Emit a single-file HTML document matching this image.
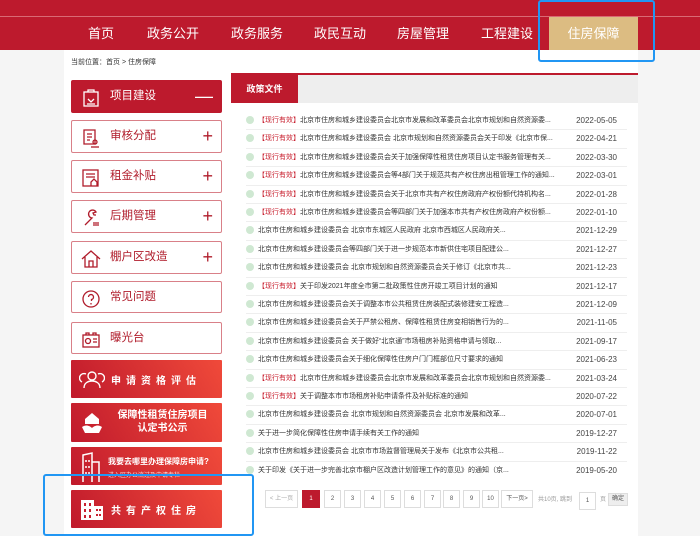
<!DOCTYPE html>
<html><head><meta charset="utf-8"><style>
*{margin:0;padding:0;box-sizing:border-box}
body{width:700px;height:536px;overflow:hidden;background:#f5f5f5;font-family:"Liberation Sans","Noto Sans CJK SC",sans-serif;position:relative}
.top{position:absolute;left:0;top:0;width:700px;height:50px;background:#bd1a2d;border-top:16px solid #bd1a2d}
.top:before{content:"";position:absolute;left:0;top:0;width:700px;height:1px;background:#d96a74}
.nav{position:absolute;top:17px;height:33px;color:#fff;font-size:13px;line-height:33px;text-align:center}
.act{background:#dcbc82}
.wrap{position:absolute;left:64px;top:50px;width:574px;height:486px;background:#fff}
.crumb{position:absolute;left:71px;top:57px;font-size:7px;color:#333}
.side{position:absolute;left:71px;width:151px;border:1px solid #d98088;border-radius:2px;background:#fff;color:#b01c2b;font-size:11.5px}
.side .t{position:absolute;left:38px;top:0;line-height:inherit}
.side .p{position:absolute;right:8px;font-size:18px;color:#b01c2b;top:0}
.side svg{position:absolute;left:9px;top:7px}
.red{position:absolute;left:71px;width:151px;background:linear-gradient(60deg,#c01a2c,#f04a3a);color:#fff;font-weight:bold;border-radius:1px}
.panel{position:absolute;left:231px;top:73px;width:407px;height:463px;background:#fff;border-top:2px solid #bd1a2d}
.tabh{height:28px;background:#eeeeee}
.tab{width:67px;height:28px;background:#bd1a2d;color:#fff;font-size:9px;font-weight:bold;line-height:28px;text-align:center}
.row{position:absolute;left:15px;width:381px;height:18.4px;border-bottom:1px solid #eee;font-size:7px;color:#333;line-height:17px}
.row .d{position:absolute;left:0;top:4px;width:8px;height:8px;border-radius:50%;background:#cfe8d2}
.row .x{position:absolute;left:12px}
.row .dt{position:absolute;right:10px;font-size:8px;color:#444}
.row i{font-style:normal;color:#c8202f}
.pg{position:absolute;top:490px;height:18px;border:1px solid #ddd;font-size:6px;line-height:16px;text-align:center;color:#555;background:#fff}
</style></head><body>
<div class="top"></div>
<div class="nav" style="left:78px;width:46px">首页</div>
<div class="nav" style="left:142px;width:62px">政务公开</div>
<div class="nav" style="left:226px;width:62px">政务服务</div>
<div class="nav" style="left:309px;width:62px">政民互动</div>
<div class="nav" style="left:392px;width:62px">房屋管理</div>
<div class="nav" style="left:476px;width:62px">工程建设</div>
<div class="nav act" style="left:549px;width:89px">住房保障</div>
<div class="wrap"></div>
<div class="crumb">当前位置：首页 &gt; 住房保障</div>

<div class="side" style="top:80px;height:33px;line-height:31px;background:#bd1a2d;border-color:#bd1a2d;color:#fff"><svg width="20" height="20" viewBox="0 0 20 20" fill="none" stroke="#fff" stroke-width="1.3"><rect x="3" y="4" width="14" height="14"/><path d="M7 4V2h6v2M7 11l3 3 3-3M6 16h8"/></svg><span class="t">项目建设</span><span class="p" style="color:#fff">—</span></div>
<div class="side" style="top:120px;height:33px;line-height:31px"><svg width="20" height="20" viewBox="0 0 20 20" fill="none" stroke="#b01c2b" stroke-width="1.3"><path d="M3 2h11v14H3zM6 6h5M6 9h5M6 12h3"/><circle cx="14" cy="14" r="2"/><path d="M10 19h8"/></svg><span class="t">审核分配</span><span class="p">+</span></div>
<div class="side" style="top:160px;height:33px;line-height:31px"><svg width="20" height="20" viewBox="0 0 20 20" fill="none" stroke="#b01c2b" stroke-width="1.3"><rect x="2" y="2" width="15" height="16"/><path d="M5 6h9M5 9h9M10 18v-4l3-3 3 3v4"/></svg><span class="t">租金补贴</span><span class="p">+</span></div>
<div class="side" style="top:200px;height:33px;line-height:31px"><svg width="20" height="20" viewBox="0 0 20 20" fill="none" stroke="#b01c2b" stroke-width="1.3"><path d="M4 17l7-7a4 4 0 1 1 4-6l-3 1 1 2 2 0M12 15h6M12 17h6"/></svg><span class="t">后期管理</span><span class="p">+</span></div>
<div class="side" style="top:241px;height:33px;line-height:31px"><svg width="20" height="20" viewBox="0 0 20 20" fill="none" stroke="#b01c2b" stroke-width="1.3"><path d="M1 10l9-8 9 8M4 8v10h12V8M8 18v-6h4v6"/></svg><span class="t">棚户区改造</span><span class="p">+</span></div>
<div class="side" style="top:281px;height:32px;line-height:30px"><svg width="20" height="20" viewBox="0 0 20 20" fill="none" stroke="#b01c2b" stroke-width="1.3"><circle cx="10" cy="10" r="8"/><path d="M7.5 8a2.5 2.5 0 1 1 3 2.5V12M10 14v1.5"/></svg><span class="t">常见问题</span></div>
<div class="side" style="top:322px;height:32px;line-height:30px"><svg width="20" height="20" viewBox="0 0 20 20" fill="none" stroke="#b01c2b" stroke-width="1.3"><rect x="2" y="5" width="16" height="12"/><path d="M5 5V3h3v2M12 5V3h3v2M12 9h4M12 12h4"/><circle cx="7" cy="11" r="2.5"/></svg><span class="t">曝光台</span></div>

<div class="red" style="top:360px;height:38px"><svg style="position:absolute;left:8px;top:8px" width="26" height="22" viewBox="0 0 26 22" fill="none" stroke="#fff" stroke-width="1.4"><circle cx="13" cy="8" r="4"/><path d="M5 20c0-5 4-7 8-7s8 2 8 7M3 14a4 4 0 0 1 4-8M23 14a4 4 0 0 0-4-8"/></svg><span style="position:absolute;left:40px;top:12px;font-size:10px;letter-spacing:5px">申请资格评估</span></div>
<div class="red" style="top:403px;height:39px"><svg style="position:absolute;left:10px;top:9px" width="22" height="22" viewBox="0 0 22 22" fill="#fff"><path d="M11 1l7 6v5H4V7z"/><path d="M1 15c4-3 8-1 10 1 2-2 6-4 10-1l-3 6H4z"/></svg><span style="position:absolute;left:34px;top:6px;width:115px;text-align:center;font-size:10px;line-height:13px">保障性租赁住房项目<br>认定书公示</span></div>
<div class="red" style="top:447px;height:38px;overflow:hidden"><svg style="position:absolute;left:10px;top:5px" width="20" height="30" viewBox="0 0 20 30" fill="none" stroke="#fff" stroke-width="1.5"><path d="M2 30V3l9-2v29M11 10h7v20M5 8v2M5 14v2M5 20v2M8 8v2M8 14v2M8 20v2"/></svg><span style="position:absolute;left:37px;top:9px;font-size:8px">我要去哪里办理保障房申请?</span><span style="position:absolute;left:37px;top:23px;font-size:6px;font-weight:normal;opacity:.8">进入区办公流过及申请专栏</span></div>
<div class="red" style="top:490px;height:38px"><svg style="position:absolute;left:10px;top:8px" width="22" height="22" viewBox="0 0 22 22" fill="#fff"><path d="M0 2h13v20H0zM13 8h9v14h-9z"/><path d="M3 5h2v3H3zM8 5h2v3H8zM3 11h2v3H3zM8 11h2v3H8zM3 17h2v3H3zM8 17h2v3H8zM15 11h2v2h-2zM18 11h2v2h-2zM15 16h2v2h-2zM18 16h2v2h-2z" fill="#c8202f"/></svg><span style="position:absolute;left:40px;top:12px;font-size:10px;letter-spacing:5px">共有产权住房</span></div>

<div class="panel"><div class="tabh"><div class="tab">政策文件</div></div>
<div class="row" style="top:37px"><span class="d"></span><span class="x"><i>【现行有效】</i>北京市住房和城乡建设委员会北京市发展和改革委员会北京市规划和自然资源委...</span><span class="dt">2022-05-05</span></div>
<div class="row" style="top:55.4px"><span class="d"></span><span class="x"><i>【现行有效】</i>北京市住房和城乡建设委员会 北京市规划和自然资源委员会关于印发《北京市保...</span><span class="dt">2022-04-21</span></div>
<div class="row" style="top:73.8px"><span class="d"></span><span class="x"><i>【现行有效】</i>北京市住房和城乡建设委员会关于加强保障性租赁住房项目认定书服务管理有关...</span><span class="dt">2022-03-30</span></div>
<div class="row" style="top:92.2px"><span class="d"></span><span class="x"><i>【现行有效】</i>北京市住房和城乡建设委员会等4部门关于规范共有产权住房出租管理工作的通知...</span><span class="dt">2022-03-01</span></div>
<div class="row" style="top:110.6px"><span class="d"></span><span class="x"><i>【现行有效】</i>北京市住房和城乡建设委员会关于北京市共有产权住房政府产权份额代持机构名...</span><span class="dt">2022-01-28</span></div>
<div class="row" style="top:129px"><span class="d"></span><span class="x"><i>【现行有效】</i>北京市住房和城乡建设委员会等四部门关于加强本市共有产权住房政府产权份额...</span><span class="dt">2022-01-10</span></div>
<div class="row" style="top:147.4px"><span class="d"></span><span class="x">北京市住房和城乡建设委员会 北京市东城区人民政府 北京市西城区人民政府关...</span><span class="dt">2021-12-29</span></div>
<div class="row" style="top:165.8px"><span class="d"></span><span class="x">北京市住房和城乡建设委员会等四部门关于进一步规范本市新供住宅项目配建公...</span><span class="dt">2021-12-27</span></div>
<div class="row" style="top:184.2px"><span class="d"></span><span class="x">北京市住房和城乡建设委员会 北京市规划和自然资源委员会关于修订《北京市共...</span><span class="dt">2021-12-23</span></div>
<div class="row" style="top:202.6px"><span class="d"></span><span class="x"><i>【现行有效】</i>关于印发2021年度全市第二批政策性住房开竣工项目计划的通知</span><span class="dt">2021-12-17</span></div>
<div class="row" style="top:221px"><span class="d"></span><span class="x">北京市住房和城乡建设委员会关于调整本市公共租赁住房装配式装修建安工程造...</span><span class="dt">2021-12-09</span></div>
<div class="row" style="top:239.4px"><span class="d"></span><span class="x">北京市住房和城乡建设委员会关于严禁公租房、保障性租赁住房变相销售行为的...</span><span class="dt">2021-11-05</span></div>
<div class="row" style="top:257.8px"><span class="d"></span><span class="x">北京市住房和城乡建设委员会 关于做好“北京通”市场租房补贴资格申请与领取...</span><span class="dt">2021-09-17</span></div>
<div class="row" style="top:276.2px"><span class="d"></span><span class="x">北京市住房和城乡建设委员会关于细化保障性住房户门门框部位尺寸要求的通知</span><span class="dt">2021-06-23</span></div>
<div class="row" style="top:294.6px"><span class="d"></span><span class="x"><i>【现行有效】</i>北京市住房和城乡建设委员会北京市发展和改革委员会北京市规划和自然资源委...</span><span class="dt">2021-03-24</span></div>
<div class="row" style="top:313px"><span class="d"></span><span class="x"><i>【现行有效】</i>关于调整本市市场租房补贴申请条件及补贴标准的通知</span><span class="dt">2020-07-22</span></div>
<div class="row" style="top:331.4px"><span class="d"></span><span class="x">北京市住房和城乡建设委员会 北京市规划和自然资源委员会 北京市发展和改革...</span><span class="dt">2020-07-01</span></div>
<div class="row" style="top:349.8px"><span class="d"></span><span class="x">关于进一步简化保障性住房申请手续有关工作的通知</span><span class="dt">2019-12-27</span></div>
<div class="row" style="top:368.2px"><span class="d"></span><span class="x">北京市住房和城乡建设委员会 北京市市场监督管理局关于发布《北京市公共租...</span><span class="dt">2019-11-22</span></div>
<div class="row" style="top:386.6px;border:none"><span class="d"></span><span class="x">关于印发《关于进一步完善北京市棚户区改造计划管理工作的意见》的通知（京...</span><span class="dt">2019-05-20</span></div>
</div>
<div class="pg" style="left:265px;width:33px;color:#aaa">&lt; 上一页</div>
<div class="pg" style="left:302px;width:18px;background:#bd1a2d;color:#fff;border-color:#bd1a2d">1</div>
<div class="pg" style="left:324px;width:17px">2</div>
<div class="pg" style="left:344px;width:17px">3</div>
<div class="pg" style="left:364px;width:17px">4</div>
<div class="pg" style="left:384px;width:17px">5</div>
<div class="pg" style="left:404px;width:17px">6</div>
<div class="pg" style="left:424px;width:17px">7</div>
<div class="pg" style="left:443px;width:17px">8</div>
<div class="pg" style="left:463px;width:17px">9</div>
<div class="pg" style="left:482px;width:17px">10</div>
<div class="pg" style="left:501px;width:32px">下一页&gt;</div>
<div style="position:absolute;left:538px;top:494px;font-size:6px;color:#999">共10页, 跳到</div>
<div class="pg" style="left:579px;width:17px;top:492px">1</div>
<div style="position:absolute;left:600px;top:494px;font-size:6px;color:#999">页</div>
<div class="pg" style="left:608px;width:20px;top:493px;height:13px;line-height:11px;background:#eee">确定</div>

<div style="position:absolute;left:538px;top:0;width:117px;height:62px;border:2px solid #2196f3;border-radius:3px"></div>
<div style="position:absolute;left:43px;top:474px;width:211px;height:62px;border:2px solid #2196f3;border-radius:3px"></div>
</body></html>
